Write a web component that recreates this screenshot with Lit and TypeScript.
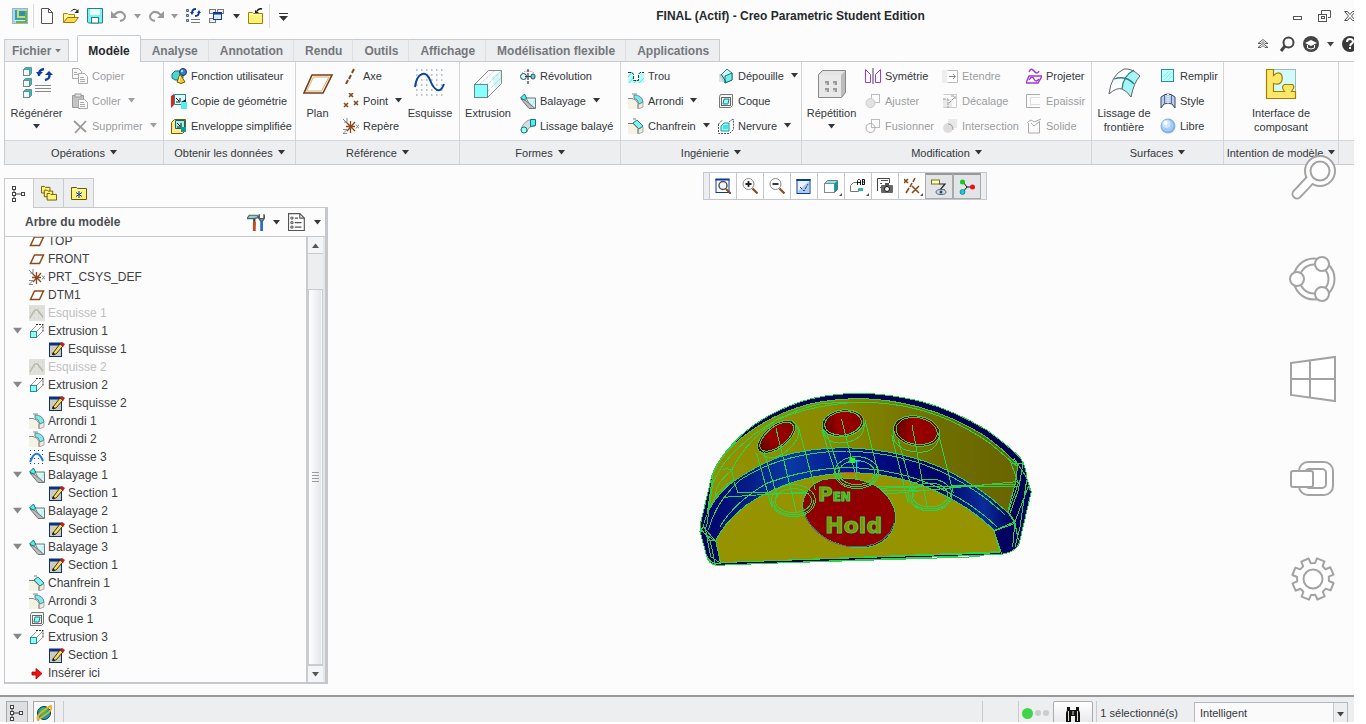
import { LitElement, html, svg, css, nothing, SVGTemplateResult, TemplateResult } from "lit";
import { customElement, property, state } from "lit/decorators.js";
import { classMap } from "lit/directives/class-map.js";

/* ---------- icon artwork, 16-unit box unless listed in BIG ---------- */

const block = (x: number, y: number) => svg`<path d="M${x} ${y + 2}l2 -2h6v6l-2 2z" fill="#1cc" stroke="#788" /><rect x=${x} y=${y + 2} width="6" height="6" fill="#e8ffff" stroke="#788" />`;

/* closed outline of an eight-tooth cog centred on the given point */
const cog = (cx: number, cy: number, inner: number, outer: number) => {
  const pts: string[] = [];
  for (let i = 0; i < 8; i++) {
    const mid = ((i * 45 + 22) * Math.PI) / 180;
    for (const [off, r] of [[-0.26, inner], [-0.19, outer], [0.19, outer], [0.26, inner]]) {
      pts.push(`${(cx + Math.cos(mid + off) * r).toFixed(1)} ${(cy + Math.sin(mid + off) * r).toFixed(1)}`);
    }
  }
  return `M${pts.join("L")}z`;
};

const ICONS: Record<string, SVGTemplateResult> = {
  logo: svg`<rect x=".5" y=".5" width="15" height="15" fill="#a8d8ee" stroke="#9fb4c0"/><path d="M13 3h2v12H4v-2h9z" fill="#6fb04a"/><rect x="3" y="2" width="10" height="10" fill="#2f9fc4"/><rect x="5" y="2" width="8" height="8" fill="#c9dc6a"/><rect x="7" y="3" width="6" height="5" fill="#2c93ae"/><path d="M3 12h10v1H3z" fill="#e8f6c8"/>`,
  new: svg`<path d="M2.500 .5h7l4 4v11h-11z" fill="#fff" stroke="#555"/><path d="M9.500 .5v4h4" fill="none" stroke="#555"/>`,
  open: svg`<path d="M.5 14.500v-9h4l1 1h6v3" fill="#fff3a0" stroke="#b08800"/><path d="M.5 14.500l4-5h11l-4 5z" fill="#ffd94a" stroke="#a07800"/><path d="M8 3.500q3-4 6-1" fill="none" stroke="#222"/><path d="M15.500 1v4h-4z" fill="#222"/>`,
  save: svg`<path d="M.5 .5h15v14.500h-14l-1-1z" fill="#7ff0f6" stroke="#22808a"/><rect x="3" y="1" width="10" height="6" fill="#e8fdfd"/><rect x="4.500" y="9.500" width="7" height="5.500" fill="#fff" stroke="#22808a"/>`,
  undo: svg`<path d="M3 7q5-5 9-2q4 4 0 7l-3 1" fill="none" stroke="#999" stroke-width="2"/><path d="M0 3v7h7z" fill="#999"/>`,
  redo: svg`<path d="M13 7q-5-5-9-2q-4 4 0 7l3 1" fill="none" stroke="#999" stroke-width="2"/><path d="M16 3v7h-7z" fill="#999"/>`,
  regen: svg`<g fill="#6dd" stroke="#567"><path d="M1.500 1.500h2v2h-2zM1.500 6.500h2v2h-2zM1.500 11.500h2v2h-2z"/></g><g fill="none" stroke="#0a3a9a" stroke-width="1.800"><path d="M7 5q0-4 4-4M14 4q0 4-4 4"/></g><path d="M5 4h4l-2 3zM12 5h4l-2-3z" fill="#0a3a9a"/><path d="M6 11.500h9M6 14.500h9" stroke="#777"/>`,
  windows: svg`<g fill="#eee" stroke="#777"><rect x=".5" y="1.500" width="6" height="4"/><rect x="8.500" y="1.500" width="6" height="4"/><rect x=".5" y="10.500" width="6" height="4"/></g><rect x="4.500" y="4.500" width="8" height="7" fill="#dceaff" stroke="#0a3a9a"/><path d="M4 5.500h9" stroke="#0a3a9a" stroke-width="2"/>`,
  folderclose: svg`<path d="M.5 15.500v-11h4l1 1h9v10z" fill="#fff27a" stroke="#a08400"/><path d="M1 6.500h13" stroke="#fffbc0"/><path d="M14 1q-3-1-5 2" fill="none" stroke="#111" stroke-width="1.500"/><path d="M7 2l4 3h-4z" fill="#111"/>`,
  menu: svg`<path d="M4 5.500h9" stroke="#333"/><path d="M4 8h9l-4.500 5z" fill="#333"/>`,
  copy: svg`<g fill="#fbfbfb" stroke="#aaa"><path d="M.5 .5h6l3 3v7h-9z"/><path d="M6.500 5.500h6l3 3v7h-9z"/></g><path d="M2 4.500h3M2 6.500h4M8 9.500h4M8 11.500h5M8 13.500h5" stroke="#aaa"/>`,
  paste: svg`<path d="M.5 2.500h11v12h-11z" fill="#c4c4c4" stroke="#999"/><rect x="3" y="1" width="6" height="3" fill="#e4e4e4" stroke="#999"/><path d="M6.500 6.500h6l3 3v6h-9z" fill="#fff" stroke="#aaa"/><path d="M8 9.500h4M8 11.500h5M8 13.500h5" stroke="#aaa"/>`,
  del: svg`<path d="M2 3l12 11M14 3L3 15" stroke="#999" stroke-width="1.800" fill="none"/>`,
  userfn: svg`<path d="M1 6l3-3h5l3 3v4l-3 2H4l-3-2z" fill="#4bd4d4" stroke="#177"/><circle cx="12" cy="4" r="3.500" fill="#2f7fd8" stroke="#235"/><circle cx="11" cy="3" r="1.200" fill="#bdf"/><path d="M9 6l5 8q-4 3-8 0z" fill="#f2c838" stroke="#7a5a00"/><path d="M9 8l-1 6" stroke="#fff3b0"/>`,
  copygeo: svg`<path d="M3.500 1.500h11v10h-11z" fill="#dff" stroke="#288"/><path d="M0 3l3-2v11l-3 3z" fill="#d22"/><path d="M5 5l3 3M9 5v4H5" stroke="#111" fill="none"/><path d="M10 9h6v7h-6z" fill="#5ee"/><path d="M10 9l5-3v3z" fill="#133"/>`,
  envelope: svg`<path d="M.5 4.500l3-3h11v11l-3 3H.5z" fill="#ffe98a" stroke="#7a5a00"/><path d="M4.500 2.500h9v8h-9z" fill="#9ee" stroke="#166"/><path d="M6 5l3 3M10 5v4H6" stroke="#111" fill="none"/><rect x="10" y="9" width="5" height="5" fill="#199"/>`,
  axis: svg`<path d="M11 1L9 5M8 7L6 11M5 12L3 16" stroke="#8a4a1c" stroke-width="2"/>`,
  point: svg`<path d="M6 0l4 4M10 0l-4 4M1 10l4 4M5 10l-4 4M11 8l4 4M15 8l-4 4" stroke="#8a4a1c" stroke-width="1.600"/>`,
  csys: svg`<path d="M3 8.500h9M4 13l8-9M3 4l9 9M7.500 3v12" stroke="#8a4a1c" stroke-width="1.300"/><path d="M0 1l3 3M4 0v4H1M13 6.500l3 4M16 6.500l-3 4M0 11.500h4l-4 4h4" stroke="#888" fill="none"/>`,
  revolve: svg`<ellipse cx="3.500" cy="8.500" rx="3" ry="3" fill="#cff" stroke="#345"/><path d="M2 5q6-4 12 0" fill="none" stroke="#888" stroke-dasharray="1 1"/><rect x="11" y="6" width="4" height="5" rx="2" fill="#5dd" stroke="#345"/><path d="M8 1v15" stroke="#111" stroke-dasharray="3 1"/><path d="M5 8.500h6" stroke="#345"/>`,
  sweep: svg`<path d="M5 3l2 2h8.500v10.500h-4z" fill="#d8f8f8" stroke="#677"/><path d="M11 15L15 6M9 9l6 6" stroke="#aee"/><path d="M1 6l4 1l10 8.500h-6z" fill="#bbb" stroke="#777"/><path d="M.5 5l4-4l2 4l-2 2z" fill="#5ee" stroke="#177"/>`,
  swblend: svg`<path d="M1 12q2-8 8-10h6v6q-7 0-8 6z" fill="#d4dede" stroke="#99a"/><path d="M10.500 1.500h5v6l-5 1z" fill="#5ee" stroke="#177"/><circle cx="4" cy="12" r="3" fill="#9ff" stroke="#177"/>`,
  hole: svg`<path d="M0 4h4l2 2v6h5V6l2-2h3v11H0z" fill="#b8fbfb"/><path d="M0 9l4-5M1 15L6 9M6 15l3-3M11 15l5-5" stroke="#6dd"/><path d="M0 4.500h4l1.500 2v6h5v-6L12 4.500h4" fill="none" stroke="#333" stroke-dasharray="3 1"/>`,
  round: svg`<path d="M0 5h4q6 2 6 11H0z" fill="#f4f2e2"/><path d="M10 11l5-2v5l-5 2z" fill="#efecd8" stroke="#aaa"/><path d="M6 2q8 0 9 7l-4 2q-1-5-5-6z" fill="#7fe8ee" stroke="#5a8d98"/><path d="M0 5.500h4q5 1 6 5v5M4 1h5" fill="none" stroke="#888"/>`,
  chamfer: svg`<path d="M0 5h5l5 6v5H0z" fill="#f4f2e2"/><path d="M10 11l5-2v5l-5 2z" fill="#efecd8" stroke="#aaa"/><path d="M5 5l4-3l6 6l-4 3z" fill="#7ff0f4" stroke="#2a7d88"/><path d="M0 5.500h5l5 5v5M5 1h3" fill="none" stroke="#777"/>`,
  draft: svg`<path d="M2 8l7-7l5 4v7l-7 3z" fill="#d0fafa" stroke="#288"/><path d="M7 15V8l7-3v7z" fill="#7ee" stroke="#177"/><path d="M1 6h5v8H1z" fill="#cdd" opacity=".8"/><path d="M3 6l5 8" stroke="#256"/>`,
  shell: svg`<path d="M1.500 3.500l1-2h12v11l-2 2h-11z" fill="#f4f4f4" stroke="#777"/><rect x="3.500" y="4.500" width="9" height="8" fill="#fff" stroke="#666"/><path d="M5 11l1-5h5l-1 5z" fill="#8ff" stroke="#277"/>`,
  rib: svg`<path d="M.5 6v9.500h11l4-4V1M.5 6l4-4M15 1l-4 3" fill="none" stroke="#555" stroke-dasharray="2 1"/><path d="M3 13V8l3-3h5v8z" fill="#8ff" stroke="#299"/><rect x="5" y="7" width="5" height="4" fill="#5dd"/>`,
  mirror: svg`<path d="M.5 1.500V14.500h5V6.500zM15.500 1.500V14.500h-5V6.500z" fill="none" stroke="#a338d8"/><path d="M8 0v16" stroke="#444"/>`,
  trim: svg`<rect x="6.500" y="1.500" width="8" height="8" fill="#fff" stroke="#bbb"/><circle cx="5.500" cy="10" r="4.500" fill="#e2e2e2" stroke="#ccc"/>`,
  merge: svg`<rect x="6.500" y="1.500" width="8" height="8" fill="#fff" stroke="#bbb"/><circle cx="5.500" cy="10" r="4.500" fill="none" stroke="#aaa"/>`,
  extend: svg`<rect x="0" y="2" width="5" height="13" fill="#eee"/><path d="M5.500 2.500h10v12h-10" fill="#fff" stroke="#bbb"/><path d="M7 8.500h6M11 6l2.500 2.500L11 11" fill="none" stroke="#888"/>`,
  offset: svg`<path d="M1 6h9v9H1z" fill="#e8e8e8"/><path d="M1.500 1.500h13v13h-13" fill="none" stroke="#ccc"/><path d="M7 10l6-6M9 3h4v4M1 6h5v9" fill="none" stroke="#999" stroke-dasharray="3 1"/>`,
  intersect: svg`<rect x="6" y="1" width="9" height="9" fill="#e8e8e8"/><circle cx="6" cy="10" r="5" fill="#ddd"/><path d="M6 6q5 0 5 6" fill="none" stroke="#999"/>`,
  project: svg`<path d="M3 4q2-5 5-1t5 0M3 8h13l-4 7H0z" fill="none" stroke="#a338c8" stroke-width="1.400"/><path d="M3 12q3-5 5-1t5 0" fill="none" stroke="#a338c8" stroke-width="1.400"/>`,
  thicken: svg`<path d="M14 1.500H.5v13H14" fill="none" stroke="#aaa"/><path d="M14 4.500H4.500v7H14" fill="none" stroke="#ddd"/>`,
  solid: svg`<path d="M1 5q4-5 7-1l7-3M2.500 5v10h11V4M5 5l3 3l6-5" fill="none" stroke="#aaa"/>`,
  fill: svg`<rect x="1.500" y="1.500" width="12" height="12" fill="#bff" stroke="#2a8f98"/><path d="M3 9l6-6M4 12l8-8M8 12l4-4" stroke="#8ee"/>`,
  style: svg`<path d="M1 4q7-6 14 0v11l-3-4q-4-2-8 0l-3 4z" fill="#b4d0f4" stroke="#445"/><path d="M4.500 2v9M11.500 2v9" stroke="#668"/><path d="M8 1v9" stroke="#dcecfc" stroke-width="2" stroke-dasharray="1 1"/>`,
  free: svg`<circle cx="8" cy="8" r="7.500" fill="#7fb1e6"/><circle cx="7.500" cy="7.500" r="6" fill="#a8cdf4"/><circle cx="6.500" cy="6" r="4" fill="#d0e6fc"/><circle cx="5.500" cy="5" r="2" fill="#fff"/>`,
  plane: svg`<path d="M5.500 4h9l-4 8.500H1.500z" fill="#fff" stroke="#8a4a1c" stroke-width="1.500"/>`,
  sketchoff: svg`<rect width="16" height="16" fill="#e0e0dc"/><path d="M1 3h14M1 8h14M1 13h14" stroke="#c8c8b8" stroke-dasharray="1 3"/><path d="M1 13L5 6q3-3 5 1l4 5" fill="none" stroke="#b8b8a4" stroke-width="1.500"/>`,
  sketch: svg`<path d="M1 1.500h14M1 5.500h14M1 9.500h14M1 14.500h14" stroke="#1540b8" stroke-dasharray="1 3"/><path d="M1 13L4 7q4-5 8 1l2 4" fill="none" stroke="#1a7ae8" stroke-width="2"/>`,
  extrude: svg`<path d="M1.500 8.500l6-6M7.500 14.500l6-6M7.500 8.500l7-7" stroke="#999"/><path d="M7 1.500h7v7" fill="none" stroke="#333" stroke-dasharray="2 1"/><rect x="1.500" y="8.500" width="6" height="6" fill="#8ff" stroke="#388"/>`,
  section: svg`<rect x=".5" y="3.500" width="12" height="12" fill="#cfccb8" stroke="#0a2f86"/><path d="M0 3h13" stroke="#0a2f86" stroke-width="3"/><path d="M4 12l7-9l3 2l-7 8l-3 1z" fill="#f7dc52" stroke="#222" stroke-width=".9"/><path d="M11 3l2-2l3 2l-2 3z" fill="#b22"/><path d="M3 14l1-3l2 2z" fill="#111"/>`,
  insert: svg`<path d="M3 7h4V3.500l6 5L7 14v-4H3z" fill="#f01010" stroke="#a00" stroke-width=".8"/>`,
  treeicon: svg`<g fill="#fff" stroke="#444"><rect x="1.500" y=".5" width="3" height="3"/><rect x="1.500" y="6.500" width="3" height="3"/><rect x="1.500" y="12.500" width="3" height="3"/><rect x="10.500" y="6.500" width="3" height="3"/></g><path d="M3 4v2M3 10v2M5 8h5" stroke="#444"/>`,
  folders: svg`<g fill="#fff27a" stroke="#6a5a00"><path d="M.5 8.500v-7h3l1 1h5v6z"/><path d="M3.500 12.500v-7h3l1 1h5v6z"/><path d="M6.500 16v-7h3l1 1h6v6z"/></g>`,
  favs: svg`<path d="M.5 14.500v-12h5l1 1h9v11z" fill="#fff27a" stroke="#6a5a00"/><path d="M1 5h14" stroke="#fffbc0"/><path d="M8 6v7M5 7.500l6 4M11 7.500l-6 4" stroke="#0a3aaa"/>`,
  tools: svg`<path d="M0 5l2-3h7l1 2l-4 1H2z" fill="#9cc" stroke="#466"/><path d="M11 1v4h4V1l1 3l-2 3h-2l-2-3z" fill="#aaa" stroke="#555"/><path d="M6.500 5v6" stroke="#444" stroke-width="2"/><path d="M6.500 8v8" stroke="#c24a20" stroke-width="2.500"/><path d="M13 7v9" stroke="#2a6ed0" stroke-width="2.500"/>`,
  list: svg`<path d="M.5 .5h10l4 4v11H.5z" fill="#fff" stroke="#555"/><path d="M10.500 .5v4h4" fill="none" stroke="#555"/><path d="M6 4.500h3M6 8.500h6M6 12.500h6" stroke="#555"/><g fill="#fff" stroke="#555"><circle cx="3.500" cy="4.500" r="1"/><circle cx="3.500" cy="8.500" r="1"/><circle cx="3.500" cy="12.500" r="1"/></g>`,
  zoomfit: svg`<rect x="1" y="1.500" width="13" height="13" fill="#fff" stroke="#0a3a9a"/><path d="M.5 1.500h14" stroke="#0a3a9a" stroke-width="2"/><circle cx="8" cy="7.500" r="4" fill="#f4f6ff" stroke="#555" stroke-width="1.500"/><path d="M11 11l5 5" stroke="#8a4a1c" stroke-width="2"/>`,
  zoomin: svg`<circle cx="6.500" cy="6" r="5.500" fill="#fff" stroke="#888"/><path d="M10.500 10.500l5 5" stroke="#8a4a1c" stroke-width="2.200"/><path d="M3.500 6h6M6.500 3v6" stroke="#222" stroke-width="1.800"/>`,
  zoomout: svg`<circle cx="6.500" cy="6" r="5.500" fill="#fff" stroke="#888"/><path d="M10.500 10.500l5 5" stroke="#8a4a1c" stroke-width="2.200"/><path d="M3.500 6h6" stroke="#222" stroke-width="1.800"/>`,
  repaint: svg`<rect x="1" y="1.500" width="13" height="14" fill="#eaf3fd" stroke="#0a3a9a"/><path d="M2 13L12 4l1 0v11H2z" fill="#a8ccf4"/><path d="M.5 2h14" stroke="#0a3a9a" stroke-width="2"/><path d="M4 9l4 4l4-7" fill="none" stroke="#334" stroke-dasharray="3 1"/>`,
  shade: svg`<path d="M1.500 5.500l3-3h10v9l-3 3h-10z" fill="#7ee" stroke="#777"/><rect x="1.500" y="5.500" width="10" height="9" fill="#f8ffff" stroke="#888"/><path d="M11.500 5.500l3-3v9l-3 3z" fill="#199"/>`,
  views: svg`<path d="M.5 7.500l3-3h4M.5 7.500v6h8v-3" fill="#fff" stroke="#777"/><path d="M9 10h4v3H9z" fill="#2bb"/><path d="M7.500 7V2.500l1-1h1l1 1V7M8 4.500h2M12.500 1v6M12.500 1.500h2v5h-2M12.500 4h2" fill="none" stroke="#111"/>`,
  camera: svg`<path d="M.5 13V.5h12V5" fill="#fff" stroke="#444"/><path d="M4 2.500h7M3 5.500h2M3 9.500h2" stroke="#555"/><rect x="4" y="7" width="12" height="8" rx="1" fill="#666"/><rect x="8" y="5" width="4" height="3" fill="#555"/><circle cx="10" cy="11" r="2.500" fill="#fff" stroke="#111"/>`,
  datums: svg`<path d="M0 1l4 4M4 1L0 5M11 0L9 4M8 5L6 9M5 10l-3 5M8 8l7 7M15 8l-7 7" stroke="#8a4a1c" stroke-width="1.600"/>`,
  annot: svg`<rect x=".5" y="1" width="8" height="4" fill="#ffc" stroke="#770"/><path d="M8.500 5H14l-5 6h5" fill="none" stroke="#222" stroke-width="1.200"/><ellipse cx="10" cy="13" rx="5" ry="2.500" fill="#cde" stroke="#567"/><circle cx="10" cy="13" r="1.500" fill="#345"/>`,
  spin: svg`<path d="M4 3l4 5h6M8 8l-4 5" fill="none" stroke="#111"/><circle cx="3.500" cy="3" r="2.500" fill="#1c1"/><circle cx="13.500" cy="8" r="2.500" fill="#e11"/><circle cx="3.500" cy="13" r="2.500" fill="#1cd" stroke="#055" stroke-width=".5"/>`,
  globe: svg`<circle cx="8" cy="8" r="6.500" fill="#18a0a8" stroke="#135"/><path d="M5 4q4-3 6 1q-1 4-5 5q-3-2-1-6z" fill="#3fc05a"/><path d="M2 15Q0 11 7 6T15 1q2 4-6 9T2 15z" fill="none" stroke="#e8b020" stroke-width="1.800"/>`,
  binoc: svg`<path d="M2 1h3v3h6V1h3v3l1 3v9h-5v-6H6v6H1V7l1-3z" fill="#111"/><path d="M3.500 5v10M12.500 5v10M8 5v4" stroke="#ddc"/>`,
  up2: svg`<path d="M3 7.500l5-4l5 4h-3l-2-2l-2 2zM3 11.500l5-4l5 4h-3l-2-2l-2 2z" fill="#fff" stroke="#444" stroke-width=".8"/>`,
  lens: svg`<circle cx="9.500" cy="6.500" r="5" fill="#fff" stroke="#444" stroke-width="2"/><path d="M6 10l-4 5" stroke="#444" stroke-width="3"/>`,
  cap: svg`<circle cx="8" cy="8" r="8" fill="#444"/><path d="M2 7l6-3l6 3l-6 3z" fill="#fff"/><path d="M4.500 9v3q3.500 2 7 0V9" fill="none" stroke="#fff"/>`,
  help: svg`<circle cx="8" cy="8" r="8" fill="#3a3a3a"/><path d="M5 6q0-3 3-3t3 3q0 1-2 2l-1 2" fill="none" stroke="#fff" stroke-width="2"/><rect x="7" y="11" width="2" height="2" fill="#fff"/>`,
  min: svg`<rect x="3.500" y="8.500" width="8" height="3" fill="#fff" stroke="#555"/>`,
  restore: svg`<path d="M5.500 6V2.500h9v7H12" fill="#fff" stroke="#555"/><rect x="2.500" y="6.500" width="8" height="7" fill="#fff" stroke="#555"/><rect x="5.500" y="8.500" width="3" height="2" fill="none" stroke="#555"/>`,
  close: svg`<path d="M2.500 3.500h3L8 6.500l2.500-3h3L9.500 8l4 4.500h-3L8 9.500l-2.500 3h-3l4-4.500z" fill="#fff" stroke="#555"/>`,
};

const BIG: Record<string, SVGTemplateResult> = {
  regen: svg`${block(2.5, 0.5)}${block(2.5, 11.5)}${block(2.5, 22.5)}<path d="M18 9q-1-6 5-7M28 6q2 6-4 7" fill="none" stroke="#0c3f9c" stroke-width="2.300"/><path d="M15 5h7l-4 4zM24 8h8l-4-4z" fill="#0c3f9c"/><path d="M14 18.500h16M14 21.500h16M14 24.500h16" stroke="#888"/>`,
  plane: svg`<path d="M10 8h20L21 26H2z" fill="#fdfdfa" stroke="#7a3b14" stroke-width="1.600"/><path d="M11.500 10h15.500l-7.500 14H4.500z" fill="none" stroke="#c9b070"/>`,
  sketch: svg`<g stroke="#9fb0be" stroke-width="1.500" stroke-dasharray="1.500 3.500"><path d="M2 3h28M2 8h28M2 13h28M2 18h28M2 23h28M2 28h28"/></g><path d="M1 20C3 5 12 3 16 13S26 28 30 17" fill="none" stroke="#0a4597" stroke-width="2"/>`,
  extrude: svg`<path d="M2.500 17.500l14-14h13v13l-14 14z" fill="#fafdfd"/><path d="M20 10l9-6v12l-6 6z" fill="#cff8f8"/><path d="M2.500 17.500l14-14h13v13l-14 14" fill="none" stroke="#888"/><path d="M15.500 17.500l14-14M8 17l14-13M16 24l13-13" stroke="#bbb" stroke-dasharray="1 1"/><rect x="2.500" y="17.500" width="13" height="13" fill="#8ff" stroke="#688"/>`,
  pattern: svg`<path d="M2.500 7.500l4-4h23v22l-4 5h-23z" fill="#bcbcbc" stroke="#888"/><path d="M3 8l4-4h22l-4 4z" fill="#e4e4e4"/><rect x="3" y="8" width="22" height="22" fill="#e8e8e8"/><g fill="#999"><rect x="9" y="14" width="4" height="4"/><rect x="17" y="14" width="4" height="4"/><rect x="9" y="21" width="4" height="4"/><rect x="17" y="21" width="4" height="4"/></g><g fill="#ccc"><rect x="9" y="16" width="2" height="2"/><rect x="17" y="16" width="2" height="2"/><rect x="9" y="23" width="2" height="2"/><rect x="17" y="23" width="2" height="2"/></g>`,
  boundary: svg`<path d="M1 27Q3 8 16 2q8-1 16 7q-6 6-9 21q-4-6-9-8t-13 5z" fill="#fafdfd"/><path d="M18 11l6-7l8 5q-6 7-9 21q-4-6-9-8q1-6 4-11z" fill="#a4f6f8"/><path d="M6 12q12-4 20 5M26 3Q15 9 14 22" fill="none" stroke="#277f88" stroke-width="1.300"/><path d="M1 27Q3 8 16 2q8-1 16 7q-6 6-9 21q-4-6-9-8t-13 5z" fill="none" stroke="#666"/>`,
  component: svg`<rect x="1.500" y="2.500" width="29" height="29" fill="#d4fbfb" stroke="#9bb"/><path d="M1.500 2.500h7v6q4-4 7-2q3 3 1 8q-2 4-8 2v8h11q-4-5 0-7h8q3 2-1 7h4v7H1.500z" fill="#fbe66a" stroke="#a08000" stroke-width="1.200"/>`,
};

const CHARMS: Record<string, SVGTemplateResult> = {
  Rechercher: svg`<path d="M22 24L8 39" stroke-width="11" stroke-linecap="round"/><circle cx="31" cy="16" r="15"/><path d="M24 22L8 39" stroke="#fff" stroke-width="7" stroke-linecap="round"/><circle cx="31" cy="16" r="9.500"/>`,
  Partager: svg`<circle cx="25" cy="24" r="20.500"/><circle cx="25" cy="24" r="14.500"/><circle cx="8" cy="24" r="7"/><circle cx="33" cy="9" r="7"/><circle cx="33" cy="39" r="7"/>`,
  "Démarrer": svg`<path d="M2 8l44-6v44L2 40zM21 5v38M2 24h44"/>`,
  "Périphériques": svg`<rect x="10" y="7" width="34" height="33" rx="9"/><rect x="16" y="14" width="21" height="19" rx="4"/><rect x="2" y="16" width="22" height="16" rx="2"/>`,
  "Paramètres": svg`<path stroke-linejoin="round" d=${cog(24, 24, 16, 21)}/><circle cx="24" cy="24" r="9.500"/>`,
};

const icon = (name: string) => html`<svg class="ic" viewBox="0 0 16 16" aria-hidden="true">${ICONS[name]}</svg>`;
const caret = () => html`<svg class="caret" viewBox="0 0 7 5" aria-hidden="true"><path d="M0 0h7L3.500 4.500z" /></svg>`;

const shared = css`
  :host { display: block; font: 11px/14px "Liberation Sans", Arial, sans-serif; color: #33373b; }
  *, *::before { box-sizing: border-box; }
  button { font: inherit; color: inherit; background: none; border: 0; padding: 0; margin: 0; display: inline-flex; align-items: center; white-space: nowrap; }
  .ic { width: 16px; height: 16px; flex: none; display: block; }
  .caret { width: 7px; height: 5px; flex: none; fill: currentColor; display: block; }
`;

/* ---------- ribbon ---------- */

interface Cmd { icon: string; label: string; off?: boolean; drop?: boolean; }
interface Big { big: string; lines: string[]; drop?: boolean; }
interface Group { id: string; title: string; cols: (Cmd[] | Big)[]; }

const c = (icon: string, label: string, drop = false, off = false): Cmd => ({ icon, label, drop, off });

const GROUPS: Group[] = [
  { id: "ops", title: "Opérations", cols: [{ big: "regen", lines: ["Régénérer"], drop: true }, [c("copy", "Copier", false, true), c("paste", "Coller", true, true), c("del", "Supprimer", true, true)]] },
  { id: "data", title: "Obtenir les données", cols: [[c("userfn", "Fonction utilisateur"), c("copygeo", "Copie de géométrie"), c("envelope", "Enveloppe simplifiée")]] },
  { id: "ref", title: "Référence", cols: [{ big: "plane", lines: ["Plan"] }, [c("axis", "Axe"), c("point", "Point", true), c("csys", "Repère")], { big: "sketch", lines: ["Esquisse"] }] },
  { id: "shapes", title: "Formes", cols: [{ big: "extrude", lines: ["Extrusion"] }, [c("revolve", "Révolution"), c("sweep", "Balayage", true), c("swblend", "Lissage balayé")]] },
  { id: "eng", title: "Ingénierie", cols: [[c("hole", "Trou"), c("round", "Arrondi", true), c("chamfer", "Chanfrein", true)], [c("draft", "Dépouille", true), c("shell", "Coque"), c("rib", "Nervure", true)]] },
  { id: "mod", title: "Modification", cols: [{ big: "pattern", lines: ["Répétition"], drop: true }, [c("mirror", "Symétrie"), c("trim", "Ajuster", false, true), c("merge", "Fusionner", false, true)], [c("extend", "Etendre", false, true), c("offset", "Décalage", false, true), c("intersect", "Intersection", false, true)], [c("project", "Projeter"), c("thicken", "Epaissir", false, true), c("solid", "Solide", false, true)]] },
  { id: "surf", title: "Surfaces", cols: [{ big: "boundary", lines: ["Lissage de", "frontière"] }, [c("fill", "Remplir"), c("style", "Style"), c("free", "Libre")]] },
  { id: "intent", title: "Intention de modèle", cols: [{ big: "component", lines: ["Interface de", "composant"] }] },
];

const TABS = ["Modèle", "Analyse", "Annotation", "Rendu", "Outils", "Affichage", "Modélisation flexible", "Applications"];

@customElement("creo-ribbon")
export class CreoRibbon extends LitElement {
  @state() private active = "Modèle";

  static styles = [shared, css`
    .tabs { display: flex; align-items: flex-end; height: 26px; padding-left: 4px; font-size: 12px; font-weight: bold; color: #74777b; }
    .tab { height: 22px; padding: 0 10px 0 11px; background: #edeef0; border-top: 1px solid #c8cbcf; border-right: 1px solid #dcdee1; }
    .tab:last-of-type { border-right-color: #c8cbcf; }
    .file { gap: 4px; padding: 0 7px; margin-right: 8px; border: 1px solid #c8cbcf; border-bottom: 0; }
    .file .caret { width: 6px; height: 4px; }
    .tab.on { height: 27px; margin-bottom: -1px; padding: 3px 10px 0; background: #fcfcfc; color: #26292c; border: 1px solid #c8cbcf; border-bottom: 0; position: relative; border-radius: 2px 2px 0 0; }
    .aux { margin-left: auto; align-self: flex-start; display: flex; align-items: center; gap: 8px; color: #444; height: 18px; }
    .aux .last { width: 12px; overflow: hidden; }
    .groups { display: grid; grid-template-columns: 159px 132px 164px 161px 181px 290px 132px 115px minmax(0, 1fr); margin-left: 4px; border: 1px solid #c8cbcf; border-right: 0; background: #fcfcfc; }
    .group { display: flex; flex-direction: column; border-right: 1px solid #d2d4d8; }
    .group.rest { border-right: 0; }
    .body { display: grid; height: 78px; padding-top: 1px; }
    .ops { grid-template-columns: 63px 1fr; }
    .data { padding-left: 3px; }
    .ref { grid-template-columns: 43px 62px 1fr; }
    .shapes { grid-template-columns: 56px 1fr; }
    .eng { grid-template-columns: 90px 1fr; padding-left: 3px; }
    .mod { grid-template-columns: 59px 77px 84px 1fr; }
    .surf { grid-template-columns: 64px 1fr; }
    .small { display: flex; flex-direction: column; align-items: flex-start; }
    .cmd { height: 25px; gap: 4px; padding: 0 4px; }
    .cmd .caret { margin-left: 3px; }
    .cmd[disabled] { color: #9c9ea1; }
    .big { flex-direction: column; padding-top: 4px; align-self: start; }
    .bigic { width: 32px; height: 32px; margin-bottom: 7px; flex: none; }
    .big .caret { margin-top: 4px; }
    .title { height: 24px; justify-content: center; gap: 5px; background: #edeef0; border-top: 1px solid #d2d4d8; }
  `];

  private col(col: Cmd[] | Big): TemplateResult {
    if (!Array.isArray(col)) {
      return html`<button class="big"><svg class="bigic" viewBox="0 0 32 32" aria-hidden="true">${BIG[col.big]}</svg>${col.lines.map((l) => html`<span>${l}</span>`)}${col.drop ? caret() : nothing}</button>`;
    }
    return html`<div class="small">${col.map((k) => html`<button class="cmd" ?disabled=${!!k.off}>${icon(k.icon)}<span>${k.label}</span>${k.drop ? caret() : nothing}</button>`)}</div>`;
  }

  render() {
    return html`
      <div class="tabs">
        <button class="tab file">Fichier ${caret()}</button>
        ${TABS.map((t) => html`<button class=${classMap({ tab: true, on: t === this.active })} @click=${() => (this.active = t)}>${t}</button>`)}
        <div class="aux">
          <button aria-label="Réduire le ruban">${icon("up2")}</button>
          <button aria-label="Rechercher">${icon("lens")}</button>
          <button aria-label="Apprentissage">${icon("cap")}</button>
          <button aria-label="Options">${caret()}</button>
          <button class="last" aria-label="Aide">${icon("help")}</button>
        </div>
      </div>
      <div class="groups">
        ${GROUPS.map((g) => html`<section class="group"><div class="body ${g.id}">${g.cols.map((k) => this.col(k))}</div><button class="title">${g.title} ${caret()}</button></section>`)}
        <div class="group rest"><div class="body"></div><div class="title"></div></div>
      </div>`;
  }
}

/* ---------- model tree ---------- */

interface Node { icon: string; label: string; child?: boolean; open?: boolean; off?: boolean; }
const leaf = (icon: string, label: string): Node => ({ icon, label });
const open = (icon: string, label: string): Node => ({ icon, label, open: true });
const sub = (label: string): Node => ({ icon: "section", label, child: true });

const NODES: Node[] = [
  leaf("plane", "TOP"), leaf("plane", "FRONT"), leaf("csys", "PRT_CSYS_DEF"), leaf("plane", "DTM1"),
  { icon: "sketchoff", label: "Esquisse 1", off: true }, open("extrude", "Extrusion 1"), sub("Esquisse 1"),
  { icon: "sketchoff", label: "Esquisse 2", off: true }, open("extrude", "Extrusion 2"), sub("Esquisse 2"),
  leaf("round", "Arrondi 1"), leaf("round", "Arrondi 2"), leaf("sketch", "Esquisse 3"),
  open("sweep", "Balayage 1"), sub("Section 1"), open("sweep", "Balayage 2"), sub("Section 1"), open("sweep", "Balayage 3"), sub("Section 1"),
  leaf("chamfer", "Chanfrein 1"), leaf("round", "Arrondi 3"), leaf("shell", "Coque 1"), open("extrude", "Extrusion 3"), sub("Section 1"),
  leaf("insert", "Insérer ici"),
];

@customElement("model-tree")
export class ModelTree extends LitElement {
  static styles = [shared, css`
    :host { display: flex; flex-direction: column; min-height: 0; }
    .tabs { display: flex; height: 29px; flex: none; }
    .tab { width: 30px; justify-content: center; background: #edeef0; border: 1px solid #c8cbcf; border-left: 0; border-bottom: 0; }
    .tab.on { background: #fcfcfc; border-left: 1px solid #c8cbcf; margin-bottom: -1px; position: relative; }
    .panel { flex: 1; min-height: 0; display: flex; flex-direction: column; border: 1px solid #c4c8cc; border-right-width: 3px; border-bottom-width: 2px; }
    .head { height: 29px; flex: none; display: flex; align-items: center; gap: 8px; padding: 0 4px 0 20px; border-bottom: 1px solid #c4c8cc; }
    .head h2 { font-size: 12px; line-height: 14px; margin: 0 auto 0 0; color: #4a4d50; }
    .head .ic { width: 18px; height: 18px; }
    .mid { flex: 1; min-height: 0; display: flex; }
    .view { flex: 1; overflow: hidden; }
    ul { list-style: none; margin: -5px 0 0; padding: 0; font-size: 12px; color: #3c3f43; }
    li { height: 18px; display: flex; align-items: center; padding-left: 24px; gap: 3px; }
    li.open { padding-left: 8px; }
    li.child { padding-left: 44px; }
    li.off { color: #c0c1c3; }
    .exp { width: 13px; color: #888; }
    .exp .caret { width: 9px; height: 8px; }
    .bar { width: 19px; display: flex; flex-direction: column; border-left: 2px solid #c8cbcf; border-right: 2px solid #e4e6e8; background: #edeef0; }
    .bar button { height: 17px; justify-content: center; background: #f4f5f6; border-bottom: 1px solid #c8cbcf; color: #555; }
    .bar .up { transform: rotate(180deg); }
    .bar button.dn { border-bottom: 0; border-top: 1px solid #c8cbcf; }
    .track { flex: 1; display: flex; flex-direction: column; padding-top: 35px; }
    .thumb { flex: 1; display: flex; flex-direction: column; align-items: center; justify-content: center; gap: 2px; border: 1px solid #c8cbcf; background: linear-gradient(90deg, #fff, #e6e7ea 90%, #fff); }
    .thumb i { width: 7px; height: 1px; background: #999; }
  `];

  render() {
    return html`
      <div class="tabs">
        <button class="tab on" aria-label="Arbre du modèle">${icon("treeicon")}</button>
        <button class="tab" aria-label="Navigateur de dossiers"><svg class="ic" viewBox="0 0 17 17">${ICONS.folders}</svg></button>
        <button class="tab" aria-label="Favoris">${icon("favs")}</button>
      </div>
      <div class="panel">
        <div class="head">
          <h2>Arbre du modèle</h2>
          <button aria-label="Paramètres">${icon("tools")}</button>${caret()}
          <button aria-label="Afficher">${icon("list")}</button>${caret()}
        </div>
        <div class="mid">
          <div class="view"><ul>${NODES.map((n) => html`<li class=${classMap({ open: !!n.open, child: !!n.child, off: !!n.off })}>${n.open ? html`<span class="exp">${caret()}</span>` : nothing}${icon(n.icon)}<span>${n.label}</span></li>`)}</ul></div>
          <div class="bar">
            <button aria-label="Haut"><span class="up">${caret()}</span></button>
            <div class="track"><div class="thumb"><i></i><i></i><i></i><i></i></div></div>
            <button class="dn" aria-label="Bas">${caret()}</button>
          </div>
        </div>
      </div>`;
  }
}

/* ---------- graphics window ---------- */

const VIEW_TOOLS: { icon: string; label: string; on?: boolean; more?: boolean }[] = [
  { icon: "zoomfit", label: "Ajuster" }, { icon: "zoomin", label: "Zoom avant" }, { icon: "zoomout", label: "Zoom arrière" },
  { icon: "repaint", label: "Redessiner" }, { icon: "shade", label: "Style d'affichage", more: true }, { icon: "views", label: "Orientations", more: true },
  { icon: "camera", label: "Gestionnaire de vues" }, { icon: "datums", label: "Références", more: true },
  { icon: "annot", label: "Annotations", on: true }, { icon: "spin", label: "Centre de rotation", on: true },
];

const bore = (x: number, y: number, rx: number, ry: number, a: number) => svg`
  <g transform="translate(${x} ${y}) rotate(${a})">
    <ellipse rx=${rx} ry=${ry} fill="url(#bore)" /><ellipse rx=${rx - 8} ry=${ry - 5} /><path d=${`M${-rx} 0q-2 ${ry + 20} ${rx} ${ry + 18}t${rx} ${-ry - 18}`} />
  </g>`;

const foot = (x: number, y: number) => svg`<g><ellipse cx=${x} cy=${y} rx="54" ry="36" /><ellipse cx=${x} cy=${y} rx="66" ry="48" /><path d="M${x - 60} ${y}q4 42 60 42t62 -44" /></g>`;

@customElement("model-view")
export class ModelView extends LitElement {
  static styles = [shared, css`
    :host { position: relative; min-width: 0; }
    .bar { display: flex; width: 284px; height: 28px; margin: 0 auto; position: relative; left: 4px; border: 1px solid #c4c8cc; background: #edeef0; padding: 0 5px; }
    .tool { flex: 1; justify-content: center; background: #fff; border-left: 1px solid #c4c8cc; position: relative; }
    .tool.on { background: #e2e4e8; border: 1px solid #aaa; border-top: 2px solid #999; }
    .tool.more::after { content: ""; position: absolute; right: 2px; bottom: 3px; border-left: 3px solid transparent; border-bottom: 3px solid #555; }
    .model { position: absolute; left: 362px; top: 208px; width: 350px; height: 200px; }
    .wire { fill: none; stroke: #2fd04c; stroke-width: 3; shape-rendering: crispEdges; }
    .emboss { font: bold 60px "DejaVu Sans", sans-serif; fill: #929000; stroke: #2fd04c; stroke-width: 3; }
    .emboss.hold { font-size: 66px; }
    .caps { font-size: 36px; }
  `];

  render() {
    return html`
      <div class="bar">${VIEW_TOOLS.map((t) => html`<button class=${classMap({ tool: true, on: !!t.on, more: !!t.more })} aria-label=${t.label}>${icon(t.icon)}</button>`)}</div>
      <svg class="model" viewBox="0 0 1050 600" role="img" aria-label="Pièce FINAL">
        <defs>
          <linearGradient id="back"><stop offset="0" stop-color="#929200"/><stop offset=".4" stop-color="#8a8a00"/><stop offset=".75" stop-color="#6e6e00"/><stop offset="1" stop-color="#6a6400"/></linearGradient>
          <linearGradient id="band"><stop offset="0" stop-color="#00006a"/><stop offset=".28" stop-color="#0a38a4"/><stop offset=".5" stop-color="#000f8a"/><stop offset=".75" stop-color="#000068"/><stop offset=".9" stop-color="#0a2c9a"/><stop offset="1" stop-color="#00005a"/></linearGradient>
          <linearGradient id="bore"><stop offset="0" stop-color="#5a0000"/><stop offset=".4" stop-color="#9a0000"/><stop offset="1" stop-color="#8c0000"/></linearGradient>
        </defs>
        <g class="wire">
          <path fill="#000058" d="M80 556Q55 552 50 528L30 455Q30 430 40 395L66 285Q80 245 125 195Q200 110 330 66Q400 42 500 40Q600 40 700 66Q800 95 890 150Q960 200 992 235Q1008 258 1010 295L1024 335L990 480Q985 515 935 523z"/>
          <path fill="url(#back)" d="M52 400L68 285Q84 240 130 195Q230 105 360 72Q430 56 520 56Q600 58 690 82Q790 110 880 165Q930 200 970 240L984 255L975 312L952 400L780 400L300 330L76 370z"/>
          <path d="M70 310Q90 250 160 190Q260 100 390 72Q520 58 640 78Q780 105 900 190L985 262M125 270Q170 180 260 120Q350 80 480 68M75 350Q80 300 130 270"/>
          <path fill="url(#band)" d="M40 440Q50 380 110 320Q180 265 270 230Q360 203 470 203Q640 210 770 270Q885 330 955 400L975 430L912 455Q840 385 730 330Q620 280 480 278Q300 285 170 375Q100 430 78 482L40 470z"/>
          <path d="M55 450Q75 370 150 300Q280 215 470 213Q640 218 775 285Q880 340 945 405M90 440Q130 370 230 310Q350 265 480 262Q630 270 740 320Q850 370 920 440"/>
          <path fill="#959300" d="M92 548L76 485Q100 430 170 375Q300 285 480 278Q620 280 730 330Q850 385 912 452L930 515z"/>
          <path fill="#000062" d="M912 452L975 425L1005 345L1015 320L1024 335L990 480Q985 515 935 523z"/>
          <path d="M912 452L930 518L80 548M170 552L870 530M960 240L985 310L955 395L975 425L968 500M1000 245L985 330L960 400M1010 300L990 440L975 500M972 235L1008 290M965 250H1000M915 452L975 430L985 480"/>
          <path fill="#000062" d="M40 440L78 485L92 552Q60 552 50 528L30 455z"/>
          <path d="M35 450L52 470L60 480L75 550M45 440L62 530L92 550M30 450L78 485M52 480H80M60 380Q80 330 130 300L145 340M70 300L50 440M95 270Q130 255 130 300"/>
          <path d="M140 337L560 345L980 305M100 352L200 345L560 325L980 312M490 320H980M430 330L700 330"/>
          <path fill="#900000" d="M337 375Q345 320 395 300Q500 280 570 325Q620 370 617 420Q605 490 530 503Q450 508 385 460Q340 420 337 375z"/>
          <path d="M340 385Q345 430 400 470Q450 508 530 498Q595 485 612 430" stroke="#567"/>
          ${bore(260, 170, 68, 34, -38)}${bore(459, 130, 63, 40, -8)}${bore(680, 153, 70, 45, 10)}
          ${foot(310, 362)}${foot(500, 278)}${foot(720, 345)}
          <path d="M200 220L245 380M325 140L376 330M258 145L320 400M220 210L262 350M395 150L440 290M525 120L565 280M455 118L500 300M410 160L455 290M605 165L655 370M745 160L790 340M666 135L712 385M625 180L672 350"/>
        </g>
        <text class="emboss" x="384" y="364">P<tspan class="caps">EN</tspan></text>
        <text class="emboss hold" x="406" y="460">Hold</text>
        <path d="M448 278H500" stroke="#e33" stroke-width="3"/><path d="M500 240V278M490 243H510" stroke="#2ee" stroke-width="3"/><path d="M478 233h18v16h-18z" fill="#3e3"/>
      </svg>`;
  }
}

/* ---------- application shell ---------- */

@customElement("app-root")
export class AppRoot extends LitElement {
  @property() title = "FINAL (Actif) - Creo Parametric Student Edition";

  static styles = [shared, css`
    :host { display: flex; flex-direction: column; height: 100vh; padding: 0 12px 2px 0; box-sizing: border-box; background: #fff; overflow: hidden; }
    .top { background: #fcfcfc; }
    .titlebar { display: flex; align-items: flex-start; height: 35px; padding: 8px 0 0 12px; }
    .qat { display: flex; align-items: center; gap: 8px; color: #333; }
    .qat .dim { color: #999; }
    .qat .tight { margin: 0 -1px; }
    .qat .rule { width: 1px; height: 24px; margin: -4px -3px; background: #d8dadd; }
    h1 { flex: 1; margin: 0; font-size: 12px; line-height: 16px; text-align: center; color: #26292c; }
    .win { display: flex; gap: 10px; }
    .win .cut { width: 12px; overflow: hidden; }
    .main { position: relative; flex: 1; min-height: 0; display: flex; background: #fcfcfc; padding: 7px 0 11px 4px; }
    model-tree { width: 324px; margin-top: 6px; flex: none; }
    model-view { flex: 1; }
    .charms { position: absolute; right: 17px; top: -10px; display: flex; flex-direction: column; gap: 52px; }
    .charm { width: 48px; height: 48px; fill: #fff; stroke: #a3a3a3; stroke-width: 2; display: block; }
    .status { height: 27px; flex: none; display: flex; align-items: flex-start; border-top: 2px solid #999; background: #edeef0; padding: 4px 6px 0; overflow: hidden; }
    .sq { width: 22px; height: 24px; justify-content: center; border: 1px solid #aaa; margin-right: 5px; background: #f8f8f8; }
    .sq.on { background: #dddfe3; }
    .rule2 { width: 1px; height: 24px; background: #c8cbcf; margin: 0 3px; }
    .rule2.far { margin: 0 32px 0 auto; }
    .dots { display: flex; align-items: center; gap: 2px; height: 24px; margin-right: 4px; }
    .dots i { width: 6px; height: 6px; border-radius: 50%; background: #ccc; }
    .dots .go { width: 11px; height: 11px; background: #3fd44a; }
    .find { width: 40px; height: 26px; justify-content: center; border: 1px solid #aaa; border-radius: 2px; background: linear-gradient(#fff, #e4e5e8); }
    .sel { line-height: 24px; margin-right: 16px; }
    .pick { position: relative; width: 154px; height: 24px; color: #444; }
    .pick select { width: 100%; height: 24px; margin-top: 1px; padding: 0 5px 3px; appearance: none; font: inherit; color: #33373b; background: #fafafa; border: 1px solid #b4b7bb; border-radius: 0; }
    .pick .arrow { position: absolute; right: 1px; top: 2px; width: 14px; height: 22px; display: flex; align-items: center; justify-content: center; border-left: 1px solid #c4c8cc; background: #edeef0; pointer-events: none; }
  `];

  render() {
    const b = (name: string, label: string, cls = "") => html`<button class=${cls} aria-label=${label}>${icon(name)}</button>`;
    return html`
      <header class="top">
        <div class="titlebar">
          <div class="qat">
            ${b("logo", "Creo")}<span class="rule"></span>${b("new", "Nouveau")}${b("open", "Ouvrir")}${b("save", "Enregistrer")}
            ${b("undo", "Annuler")}<span class="dim tight">${caret()}</span>${b("redo", "Rétablir")}<span class="dim tight">${caret()}</span>
            ${b("regen", "Régénérer")}${b("windows", "Fenêtres")}<span>${caret()}</span>${b("folderclose", "Fermer")}<span class="rule"></span>${b("menu", "Personnaliser")}
          </div>
          <h1>${this.title}</h1>
          <div class="win">${b("min", "Réduire")}${b("restore", "Restaurer")}${b("close", "Quitter", "cut")}</div>
        </div>
        <creo-ribbon></creo-ribbon>
      </header>
      <main class="main">
        <model-tree></model-tree>
        <model-view></model-view>
        <nav class="charms">${Object.keys(CHARMS).map((k) => html`<button aria-label=${k}><svg class="charm" viewBox="0 0 48 48">${CHARMS[k]}</svg></button>`)}</nav>
      </main>
      <footer class="status">
        ${b("treeicon", "Arbre du modèle", "sq on")}${b("globe", "Navigateur", "sq")}<span class="rule2"></span>
        <span class="rule2 far"></span><span class="rule2"></span>
        <span class="dots"><i class="go"></i><i></i><i></i></span>
        <button class="find" aria-label="Rechercher">${icon("binoc")}</button><span class="rule2"></span>
        <span class="sel">1 sélectionné(s)</span>
        <label class="pick"><select aria-label="Filtre de sélection"><option>Intelligent</option></select><span class="arrow">${caret()}</span></label>
      </footer>`;
  }
}
